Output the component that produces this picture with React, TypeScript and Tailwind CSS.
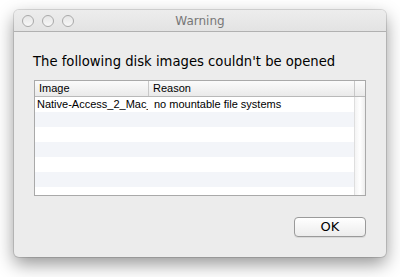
const rows = [
  { image: "Native-Access_2_Mac_1.0.dmg", reason: "no mountable file systems" },
  { image: "", reason: "" },
  { image: "", reason: "" },
  { image: "", reason: "" },
  { image: "", reason: "" },
  { image: "", reason: "" },
  { image: "", reason: "" },
];

const font = { fontFamily: '"Lucida Grande", "DejaVu Sans", sans-serif' };
const tableFont = { fontFamily: '"Liberation Sans", Arial, sans-serif' };

function Light() {
  return (
    <span className="block h-[12px] w-[12px] rounded-full border border-[#a9a9a9] bg-gradient-to-b from-[#e6e6e6] to-[#f7f7f7]" />
  );
}

export default function App() {
  return (
    <div className="h-[277px] w-[400px] bg-white pl-[14px] pt-[10px]" style={font}>
      <div className="flex h-[247px] w-[372px] flex-col overflow-hidden rounded-[5px] bg-[#ececec] shadow-[0_7px_18px_rgba(0,0,0,0.42),0_0_0_1px_rgba(0,0,0,0.12)]">
        {/* title bar */}
        <div className="relative flex h-[22px] shrink-0 items-center border-b border-[#b1b1b1] bg-gradient-to-b from-[#ededed] to-[#e3e3e3] pl-[8px]">
          <div className="flex gap-[8px]">
            <Light />
            <Light />
            <Light />
          </div>
          <div className="absolute inset-0 flex items-center justify-center text-[12px] text-[#777]">
            Warning
          </div>
        </div>

        {/* body */}
        <div className="flex flex-1 flex-col px-[20px]">
          <div className="mt-[21px] -ml-[1px] text-[13.2px] leading-[18px] text-black">
            The following disk images couldn't be opened
          </div>

          <div className="mt-[9px] flex h-[116px] flex-col border border-[#a9a9a9] bg-white" style={tableFont}>
            {/* header */}
            <div className="flex h-[16px] shrink-0 border-b border-[#b9b9b9] bg-gradient-to-b from-[#fbfbfb] to-[#eaeaea] text-[11px] leading-[15px] text-black">
              <div className="w-[114px] border-r border-[#c8c8c8] pl-[4px]">Image</div>
              <div className="flex-1 pl-[4px]">Reason</div>
              <div className="w-[11px] border-l border-[#c8c8c8]" />
            </div>
            {/* rows */}
            <div className="flex flex-1 overflow-hidden">
              <div className="flex-1">
                {rows.map((r, i) => (
                  <div
                    key={i}
                    className={`flex h-[15px] text-[11px] leading-[15px] text-black ${i % 2 === 1 ? "bg-[#f3f5f9]" : "bg-white"}`}
                  >
                    <div className="w-[113px] shrink-0 overflow-hidden whitespace-nowrap pl-[2px]">{r.image}</div>
                    <div className="flex-1 overflow-hidden whitespace-nowrap pl-[6px]">{r.reason}</div>
                  </div>
                ))}
              </div>
              <div className="w-[11px] border-l border-[#dedede] bg-gradient-to-r from-[#f4f4f4] via-white to-[#ededed]" />
            </div>
          </div>

          <div className="mt-[21px] flex justify-end">
            <button className="h-[20px] w-[72px] rounded-[4px] border border-[#9a9a9a] bg-gradient-to-b from-white to-[#ececec] text-[13px] leading-[18px] text-black shadow-[0_1px_0_rgba(0,0,0,0.08)]">
              OK
            </button>
          </div>
        </div>
      </div>
    </div>
  );
}
